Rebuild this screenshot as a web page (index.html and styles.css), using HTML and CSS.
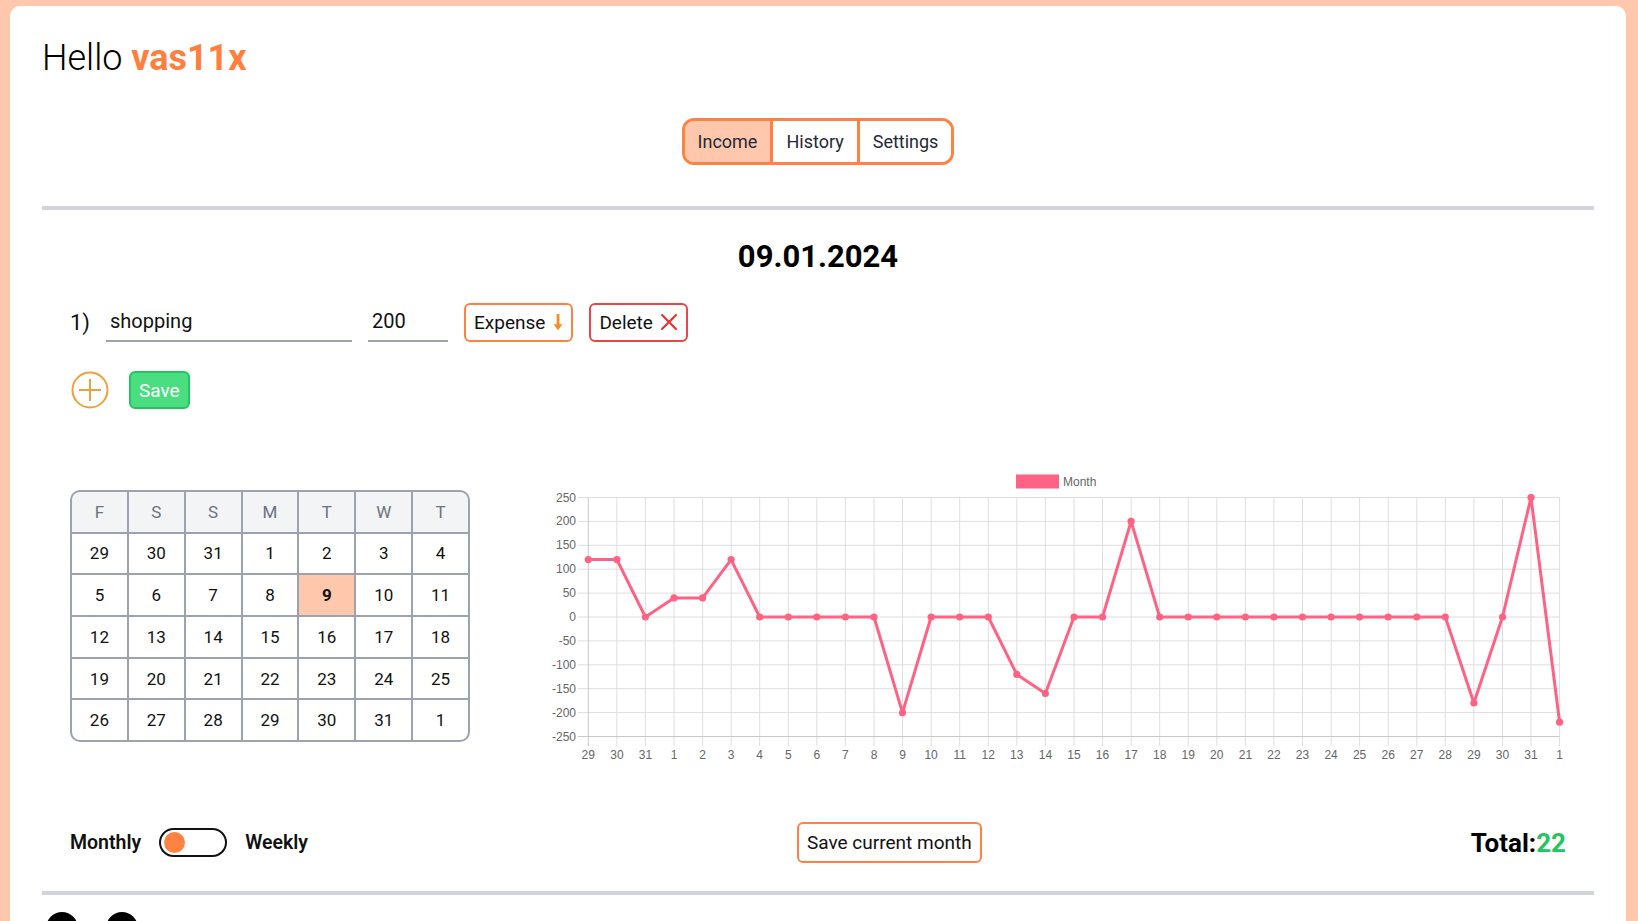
FILE: index.html
```html
<!DOCTYPE html>
<html lang="en">
<head>
<meta charset="utf-8">
<title>Budget</title>
<link rel="stylesheet" href="styles.css">
</head>
<body>
<div class="card">
  <h1 class="greeting">Hello <span class="name">vas11x</span></h1>
  <div class="tabs-wrap">
    <nav class="tabs">
      <button class="tab active">Income</button>
      <button class="tab">History</button>
      <button class="tab">Settings</button>
    </nav>
  </div>
  <hr class="divider">
  <section class="main">
    <h2 class="date">09.01.2024</h2>
    <div class="entry">
      <span class="num">1)</span>
      <input class="field field-name" type="text" value="shopping">
      <input class="field field-amount" type="text" value="200">
      <button class="btn btn-expense">Expense
        <svg width="10" height="18" viewBox="0 0 10 18"><path d="M3.6 1h2.8v10.2h3.1L5 17.2 0.5 11.2h3.1z" fill="#ff8a1f"/></svg>
      </button>
      <button class="btn btn-delete">Delete
        <svg width="18" height="18" viewBox="0 0 18 18"><path d="M2 2l14 14M16 2L2 16" stroke="#ef2b2b" stroke-width="2" stroke-linecap="round"/></svg>
      </button>
    </div>
    <div class="actions">
      <button class="add" aria-label="Add">
        <svg width="38" height="38" viewBox="0 0 38 38"><circle cx="19" cy="19" r="17.5" fill="none" stroke="#e8a33d" stroke-width="2"/><path d="M19 8v22M8 19h22" stroke="#e8a33d" stroke-width="2"/></svg>
      </button>
      <button class="save">Save</button>
    </div>
    <div class="stats">
      <div class="calendar">
        <div class="cell head">F</div><div class="cell head">S</div><div class="cell head">S</div><div class="cell head">M</div><div class="cell head">T</div><div class="cell head">W</div><div class="cell head">T</div>
        <div class="cell">29</div><div class="cell">30</div><div class="cell">31</div><div class="cell">1</div><div class="cell">2</div><div class="cell">3</div><div class="cell">4</div>
        <div class="cell">5</div><div class="cell">6</div><div class="cell">7</div><div class="cell">8</div><div class="cell today">9</div><div class="cell">10</div><div class="cell">11</div>
        <div class="cell">12</div><div class="cell">13</div><div class="cell">14</div><div class="cell">15</div><div class="cell">16</div><div class="cell">17</div><div class="cell">18</div>
        <div class="cell">19</div><div class="cell">20</div><div class="cell">21</div><div class="cell">22</div><div class="cell">23</div><div class="cell">24</div><div class="cell">25</div>
        <div class="cell">26</div><div class="cell">27</div><div class="cell">28</div><div class="cell">29</div><div class="cell">30</div><div class="cell">31</div><div class="cell">1</div>
      </div>
      <svg class="chart" width="1018" height="310" viewBox="548 461 1018 310">
        <defs>
          <marker id="dot" viewBox="0 0 8 8" refX="4" refY="4" markerWidth="8" markerHeight="8" markerUnits="userSpaceOnUse">
            <circle cx="4" cy="4" r="3.6" fill="#ff6384"/>
          </marker>
        </defs>
        <rect class="legend-box" x="1016.5" y="475" width="42" height="13"/>
        <text class="legend-text" x="1063" y="486">Month</text>
        <path class="grid" d="M578 497.5H1559.6M578 521.4H1559.6M578 545.3H1559.6M578 569.2H1559.6M578 593.1H1559.6M578 617H1559.6M578 640.9H1559.6M578 664.8H1559.6M578 688.7H1559.6M578 712.6H1559.6
        M616.9 497.5V746M645.4 497.5V746M674 497.5V746M702.6 497.5V746M731.1 497.5V746M759.7 497.5V746M788.3 497.5V746M816.8 497.5V746M845.4 497.5V746M874 497.5V746M902.5 497.5V746M931.1 497.5V746M959.7 497.5V746M988.3 497.5V746M1016.8 497.5V746M1045.4 497.5V746M1074 497.5V746M1102.5 497.5V746M1131.1 497.5V746M1159.7 497.5V746M1188.2 497.5V746M1216.8 497.5V746M1245.4 497.5V746M1273.9 497.5V746M1302.5 497.5V746M1331.1 497.5V746M1359.6 497.5V746M1388.2 497.5V746M1416.8 497.5V746M1445.3 497.5V746M1473.9 497.5V746M1502.5 497.5V746M1531 497.5V746M1559.6 497.5V746"/>
        <path class="axis" d="M578 736.5H1559.6M588.3 497.5V746"/>
        <g class="ylabels">
          <text x="576" y="501.5">250</text><text x="576" y="525.4">200</text><text x="576" y="549.3">150</text><text x="576" y="573.2">100</text><text x="576" y="597.1">50</text><text x="576" y="621">0</text><text x="576" y="644.9">-50</text><text x="576" y="668.8">-100</text><text x="576" y="692.7">-150</text><text x="576" y="716.6">-200</text><text x="576" y="740.5">-250</text>
        </g>
        <g class="xlabels">
          <text x="588.3" y="759">29</text><text x="616.9" y="759">30</text><text x="645.4" y="759">31</text><text x="674" y="759">1</text><text x="702.6" y="759">2</text><text x="731.1" y="759">3</text><text x="759.7" y="759">4</text><text x="788.3" y="759">5</text><text x="816.8" y="759">6</text><text x="845.4" y="759">7</text><text x="874" y="759">8</text><text x="902.5" y="759">9</text><text x="931.1" y="759">10</text><text x="959.7" y="759">11</text><text x="988.3" y="759">12</text><text x="1016.8" y="759">13</text><text x="1045.4" y="759">14</text><text x="1074" y="759">15</text><text x="1102.5" y="759">16</text><text x="1131.1" y="759">17</text><text x="1159.7" y="759">18</text><text x="1188.2" y="759">19</text><text x="1216.8" y="759">20</text><text x="1245.4" y="759">21</text><text x="1273.9" y="759">22</text><text x="1302.5" y="759">23</text><text x="1331.1" y="759">24</text><text x="1359.6" y="759">25</text><text x="1388.2" y="759">26</text><text x="1416.8" y="759">27</text><text x="1445.3" y="759">28</text><text x="1473.9" y="759">29</text><text x="1502.5" y="759">30</text><text x="1531" y="759">31</text><text x="1559.6" y="759">1</text>
        </g>
        <polyline class="line" points="588.3,559.6 616.9,559.6 645.4,617 674,597.9 702.6,597.9 731.1,559.6 759.7,617 788.3,617 816.8,617 845.4,617 874,617 902.5,712.6 931.1,617 959.7,617 988.3,617 1016.8,674.4 1045.4,693.5 1074,617 1102.5,617 1131.1,521.4 1159.7,617 1188.2,617 1216.8,617 1245.4,617 1273.9,617 1302.5,617 1331.1,617 1359.6,617 1388.2,617 1416.8,617 1445.3,617 1473.9,703 1502.5,617 1531,497.5 1559.6,722.2"/>
      </svg>
    </div>
    <div class="footer-row">
      <div class="mode">
        <span>Monthly</span>
        <span class="switch"><span class="knob"></span></span>
        <span>Weekly</span>
      </div>
      <button class="save-month">Save current month</button>
      <div class="total">Total:<span class="value">22</span></div>
    </div>
  </section>
  <hr class="divider divider-bottom">
  <div class="socials">
    <span class="social"></span>
    <span class="social"></span>
  </div>
</div>
</body>
</html>
```

FILE: styles.css
```css
* { box-sizing: border-box; }
html { overflow: hidden; }
body {
  margin: 0;
  padding: 6px 12px 0 10px;
  background: #ffc8ad;
  font-family: Roboto, "Liberation Sans", Arial, sans-serif;
  color: #111;
  overflow: hidden;
}
.card {
  background: #fff;
  border-radius: 10px 10px 0 0;
  padding: 30px 32px 0;
  min-height: 940px;
}
.greeting {
  margin: 0;
  font-size: 36px;
  line-height: 44px;
  font-weight: 300;
  color: #000;
}
.greeting .name { font-weight: 700; color: #ff7f3e; }

.tabs-wrap { display: flex; justify-content: center; margin-top: 38px; }
.tabs {
  display: flex;
  border: 3px solid #ff8243;
  border-radius: 12px;
  overflow: hidden;
}
.tab {
  font-family: inherit;
  font-size: 18px;
  line-height: 21px;
  padding: 10px 13px;
  background: #fff;
  border: none;
  color: #1f2937;
}
.tab + .tab { border-left: 3px solid #ff8243; }
.tab.active { background: #ffc8ad; }

.divider {
  display: block;
  height: 4px;
  border: none;
  background: #d1d5db;
  margin: 41px 0 0;
}
.divider-bottom { margin-top: 28px; }

.main { padding: 0 28px; }
.date {
  margin: 29px 0 0;
  text-align: center;
  font-size: 31px;
  line-height: 36px;
  font-weight: 700;
  color: #000;
}

.entry {
  display: flex;
  align-items: center;
  gap: 16px;
  margin-top: 27px;
}
.num { font-size: 22px; color: #111; }
.field {
  font-family: inherit;
  font-size: 20px;
  color: #111;
  height: 40px;
  border: none;
  border-bottom: 2px solid #9ca3af;
  padding: 0 4px;
  outline: none;
  background: transparent;
}
.field-name { width: 246px; }
.field-amount { width: 80px; }
.btn {
  display: flex;
  align-items: center;
  gap: 8px;
  height: 39px;
  padding: 0 8px;
  font-family: inherit;
  font-size: 19px;
  color: #111;
  background: #fff;
  border-radius: 6px;
}
.btn-expense { border: 2px solid #ff8243; }
.btn-delete { border: 2px solid #ef4444; gap: 7px; }

.actions {
  display: flex;
  align-items: center;
  gap: 20px;
  margin-top: 29px;
  padding-left: 1px;
}
.add {
  display: block;
  padding: 0;
  border: none;
  background: none;
  width: 38px;
  height: 38px;
}
.add svg { display: block; }
.save {
  height: 38px;
  padding: 0 8px;
  font-family: inherit;
  font-size: 19px;
  color: #fff;
  background: #4ade80;
  border: 2px solid #22c55e;
  border-radius: 6px;
}

.stats {
  display: flex;
  align-items: center;
  gap: 78px;
  margin-top: 52px;
}
.calendar {
  flex: none;
  width: 400px;
  display: grid;
  grid-template-columns: repeat(7, 1fr);
  grid-auto-rows: 39.7px;
  gap: 2px;
  padding: 2px;
  background: #9ca3af;
  border-radius: 10px;
}
.cell {
  display: flex;
  align-items: center;
  justify-content: center;
  background: #fff;
  font-size: 17px;
  color: #111;
}
.cell.head { background: #f3f4f6; color: #6b7280; }
.cell.today { background: #ffc8ad; font-weight: 700; }
.cell:nth-child(1) { border-top-left-radius: 8px; }
.cell:nth-child(7) { border-top-right-radius: 8px; }
.cell:nth-last-child(7) { border-bottom-left-radius: 8px; }
.cell:last-child { border-bottom-right-radius: 8px; }

.chart { display: block; flex: none; }
.chart text { font-family: "Liberation Sans", Arial, sans-serif; font-size: 12px; fill: #666; }
.chart .ylabels text { text-anchor: end; }
.chart .xlabels text { text-anchor: middle; }
.chart .grid { stroke: #dedede; stroke-width: 1; fill: none; }
.chart .axis { stroke: #c8c8c8; stroke-width: 1; fill: none; }
.chart .legend-box { fill: #ff6384; stroke: #ff6384; }
.chart .line {
  fill: none;
  stroke: #ff6384;
  stroke-width: 3;
  stroke-linejoin: round;
  marker-start: url(#dot);
  marker-mid: url(#dot);
  marker-end: url(#dot);
}

.footer-row {
  display: flex;
  justify-content: space-between;
  align-items: center;
  margin-top: 51px;
}
.mode {
  display: flex;
  align-items: center;
  gap: 18px;
  font-size: 19.5px;
  font-weight: 600;
  color: #111;
}
.switch {
  display: flex;
  align-items: center;
  width: 68px;
  height: 29px;
  border: 2px solid #111;
  border-radius: 15px;
  padding-left: 3px;
}
.knob {
  width: 21px;
  height: 21px;
  border-radius: 50%;
  background: #ff8243;
}
.save-month {
  height: 41px;
  padding: 0 8px;
  font-family: inherit;
  font-size: 19px;
  color: #111;
  background: #fff;
  border: 2px solid #ff8243;
  border-radius: 6px;
}
.total { font-size: 26px; font-weight: 700; color: #000; }
.total .value { color: #22c55e; }

.socials {
  display: flex;
  gap: 28px;
  margin-top: 17px;
  padding-left: 4px;
}
.social {
  width: 32px;
  height: 32px;
  border-radius: 50%;
  background: #000;
}
```
